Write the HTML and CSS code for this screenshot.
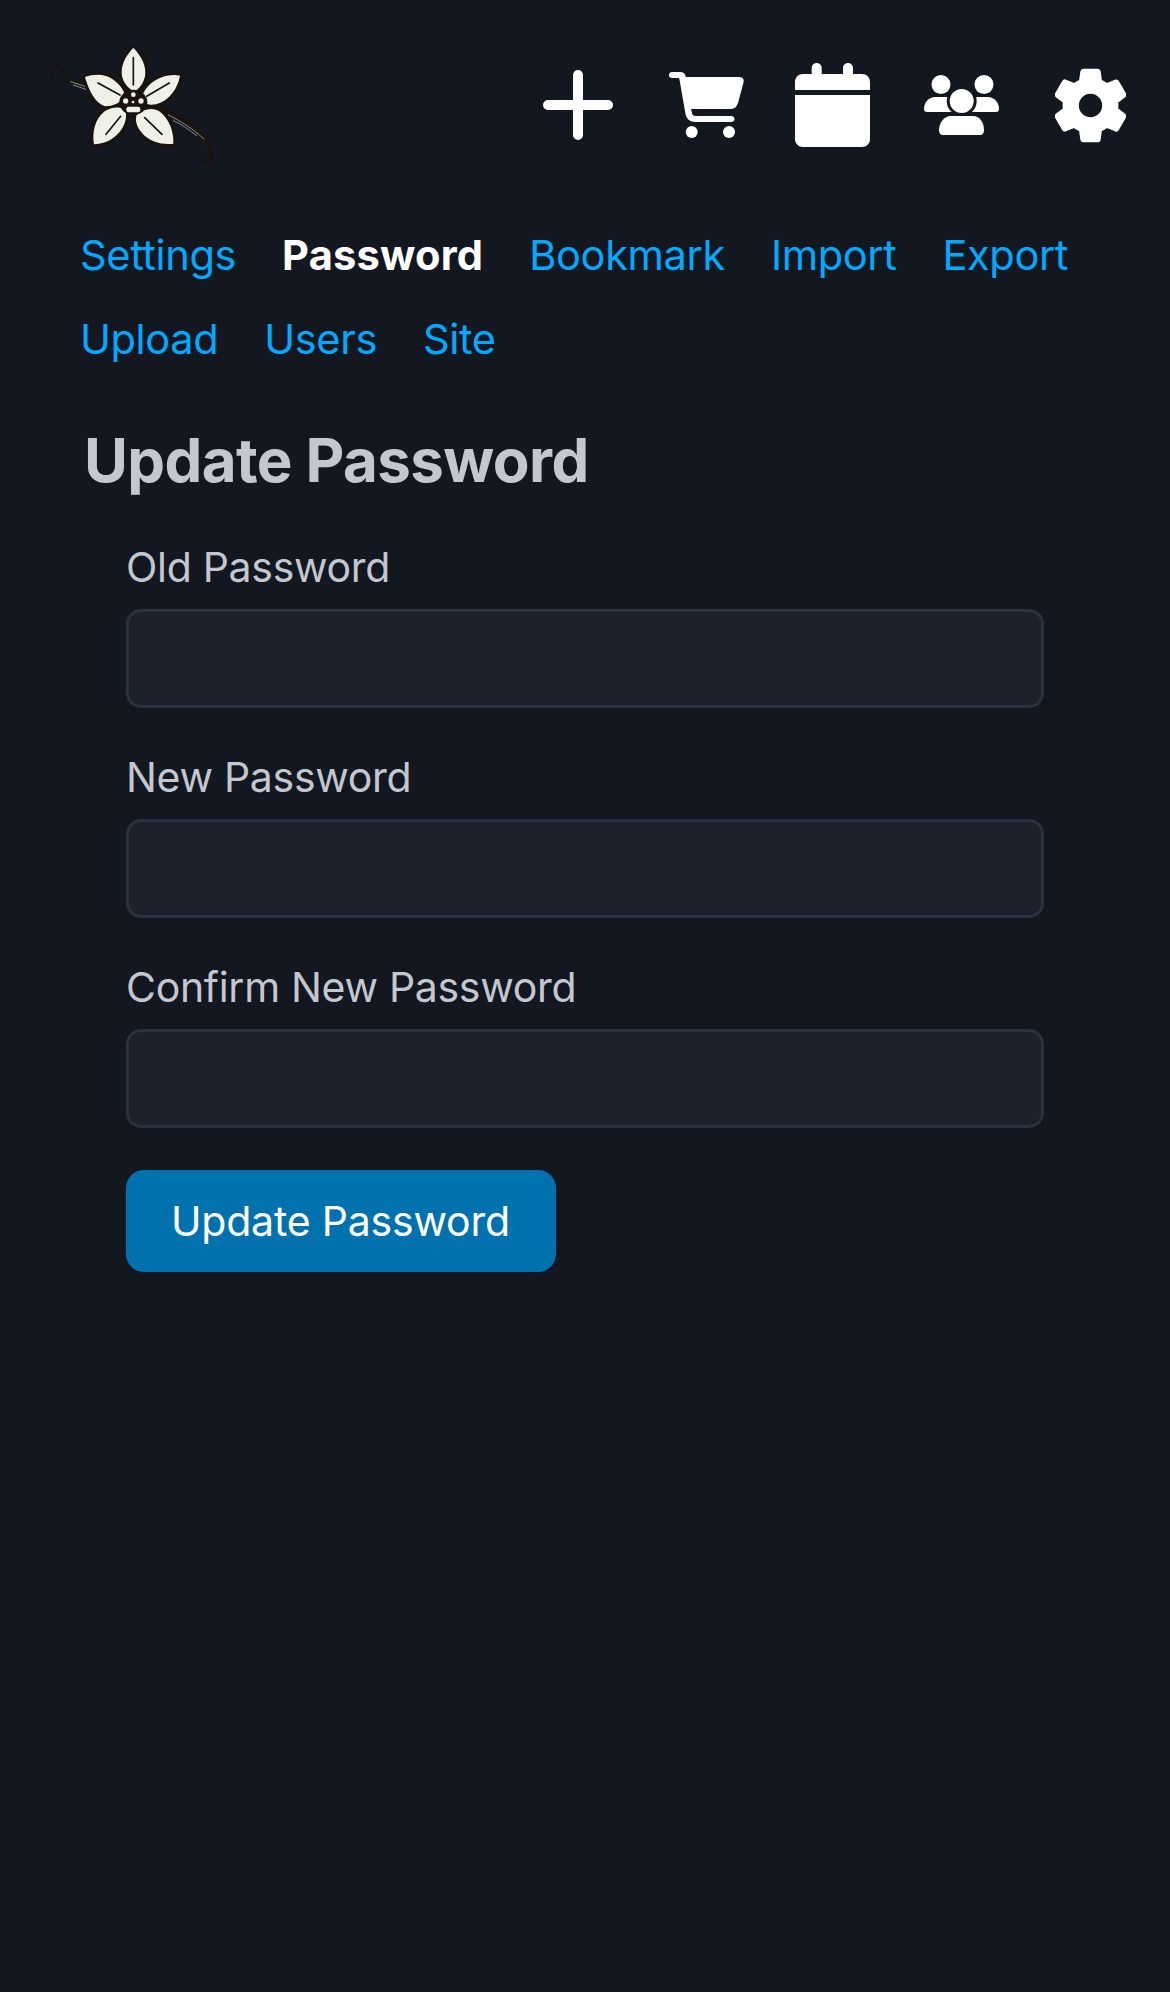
FILE: index.html
```html
<!DOCTYPE html>
<html lang="en">
<head>
  <meta charset="UTF-8">
  <title>Update Password</title>
  <link rel="stylesheet" href="styles.css">
</head>
<body>

  <header class="topbar">
    <a href="#" class="logo">
      <svg viewBox="0 0 600 450" width="200" height="150" aria-label="Vanilla flower">
        <defs>
          <g id="petals">
            <path d="M310 56 C336 84 350 112 345 142 C340 165 327 180 312 188 C295 178 282 165 276 142 C271 112 284 84 310 56Z"/>
            <path d="M450 140 C444 175 420 214 378 226 C360 230 342 226 334 208 C342 184 358 160 388 148 C408 139 432 136 450 140Z"/>
            <path d="M165 144 C198 133 228 136 250 152 C268 165 280 180 286 202 C272 222 250 232 225 232 C197 224 176 185 165 144Z"/>
            <path d="M192 346 C186 312 194 270 224 247 C242 234 265 232 284 240 C293 258 288 288 266 312 C246 334 222 344 192 346Z"/>
            <path d="M430 344 C395 348 360 338 338 314 C320 296 314 274 320 258 C340 240 368 234 390 248 C418 270 432 308 430 344Z"/>
          </g>
        </defs>
        <g fill="none" stroke="#1a130c" stroke-linecap="round">
          <path d="M65 142 C60 118 75 105 88 112 C95 135 130 160 175 178" stroke-width="8"/>
          <path d="M395 240 C450 262 510 300 535 340 C550 370 548 392 522 402" stroke-width="13"/>
        </g>
        <g fill="none" stroke="#c9c8bd" stroke-width="2" stroke-linecap="round">
          <path d="M122 158 L165 172"/>
          <path d="M130 168 L170 182"/>
          <path d="M415 258 C450 275 490 300 522 330"/>
          <path d="M430 275 C455 285 480 305 500 320"/>
        </g>
        <use href="#petals" fill="#1a130c" stroke="#1a130c" stroke-width="18" stroke-linejoin="round"/>
        <use href="#petals" fill="#eff0e8"/>
        <g fill="none" stroke="#1a130c" stroke-width="5" stroke-linecap="round">
          <path d="M310 86 L310 168"/>
          <path d="M418 162 L350 202"/>
          <path d="M204 162 L270 198"/>
          <path d="M228 316 L272 262"/>
          <path d="M396 316 L344 266"/>
        </g>
        <ellipse cx="310" cy="220" rx="42" ry="38" fill="#1a130c"/>
        <g fill="#eff0e8">
          <circle cx="287" cy="216" r="8"/>
          <circle cx="310" cy="197" r="7"/>
          <circle cx="333" cy="216" r="8"/>
          <circle cx="309" cy="219" r="4"/>
          <rect x="289" y="233" width="42" height="17" rx="7"/>
        </g>
      </svg>
    </a>
    <nav class="icons">
      <a href="#" class="icon-link">
        <svg viewBox="0 0 70 70" width="70" height="70"><path d="M35 5 V65 M5 35 H65" stroke="#fff" stroke-width="10" stroke-linecap="round" fill="none"/></svg>
      </a>
      <a href="#" class="icon-link">
        <svg viewBox="0 0 75 66" width="75" height="66">
          <path fill="#fff" d="M3 0 H11 C14 0 16 1.500 16.500 4 L16.800 5 H70 C73.500 5 75.500 7 74.500 10.500 L69 31 C67.500 35.500 65 37 61 37 H22 L23 41 C23.300 43 24.500 44 26.500 44 H62 C64 44 65.500 45.300 65.500 47 C65.500 48.700 64 50 62 50 H26.500 C21 50 17.500 47 16.500 42 L10.500 7.500 C10.300 6.500 10 6 9 6 H3 C1.200 6 0 4.700 0 3 C0 1.300 1.200 0 3 0Z"/>
          <circle cx="22.700" cy="60" r="6" fill="#fff"/>
          <circle cx="60" cy="60" r="6" fill="#fff"/>
        </svg>
      </a>
      <a href="#" class="icon-link calendar">
        <svg viewBox="0 0 75 84" width="75" height="84">
          <path fill="#fff" d="M21.700 0 C24.500 0 26.700 2.200 26.700 5 V11 H48 V5 C48 2.200 50.200 0 53 0 C55.800 0 58 2.200 58 5 V11 H67 C71.500 11 75 14.500 75 19 V27 H0 V19 C0 14.500 3.500 11 8 11 H16.700 V5 C16.700 2.200 18.900 0 21.700 0Z"/>
          <path fill="#fff" d="M0 32 H75 V76 C75 80.500 71.500 84 67 84 H8 C3.500 84 0 80.500 0 76Z"/>
        </svg>
      </a>
      <a href="#" class="icon-link">
        <svg viewBox="0 0 75 60" width="75" height="60">
          <g fill="#fff">
            <circle cx="17" cy="9.500" r="9.500"/>
            <circle cx="60" cy="9.500" r="9.500"/>
            <path d="M11 22 H23 C26 22 28 23 29 25 V37 H3 C1 37 0 36 0 34 C0 27 5 22 11 22Z"/>
            <path d="M54 22 H64 C70 22 75 27 75 34 C75 36 74 37 72 37 H47 V25 C48 23 51 22 54 22Z"/>
            <circle cx="37.700" cy="26" r="13.500" stroke="#13171f" stroke-width="3"/>
            <path d="M27 41 H49 C56 41 60 48 60 55 C60 58.500 58.500 60 56 60 H19 C16.500 60 15 58.500 15 55 C15 48 20 41 27 41Z"/>
          </g>
        </svg>
      </a>
      <a href="#" class="icon-link">
        <svg viewBox="2.400 1.900 19.200 20.200" width="71" height="75"><path fill="#fff" stroke="#fff" stroke-width=".7" stroke-linejoin="round" fill-rule="evenodd" d="M19.140 12.940c.04-.3.06-.61.06-.94 0-.32-.02-.64-.07-.94l2.030-1.580c.18-.14.23-.41.12-.61l-1.920-3.320c-.12-.22-.37-.29-.59-.22l-2.390.96c-.5-.38-1.030-.7-1.620-.94l-.36-2.540c-.04-.24-.24-.41-.48-.41h-3.840c-.24 0-.43.17-.47.41l-.36 2.540c-.59.24-1.130.57-1.620.94l-2.390-.96c-.22-.08-.47 0-.59.22L2.740 8.870c-.12.21-.08.47.12.61l2.030 1.580c-.05.3-.09.63-.09.94s.02.64.07.94l-2.030 1.580c-.18.14-.23.41-.12.61l1.920 3.320c.12.22.37.29.59.22l2.390-.96c.5.38 1.030.7 1.620.94l.36 2.540c.05.24.24.41.48.41h3.840c.24 0 .44-.17.47-.41l.36-2.540c.59-.24 1.130-.56 1.620-.94l2.390.96c.22.08.47 0 .59-.22l1.920-3.320c.12-.22.07-.47-.12-.61l-2.010-1.580zM12 15.500c-1.930 0-3.500-1.570-3.500-3.500s1.570-3.500 3.500-3.500 3.500 1.570 3.500 3.500-1.570 3.500-3.500 3.500z"/></svg>
      </a>
    </nav>
  </header>

  <nav class="tabs">
    <a href="#">Settings</a>
    <a href="#" class="active">Password</a>
    <a href="#">Bookmark</a>
    <a href="#">Import</a>
    <a href="#">Export</a>
    <a href="#">Upload</a>
    <a href="#">Users</a>
    <a href="#">Site</a>
  </nav>

  <main class="content">
    <h1>Update Password</h1>
    <form class="password-form">
      <div class="form-group">
        <label for="old-password">Old Password</label>
        <input type="password" class="form-control" id="old-password">
      </div>
      <div class="form-group">
        <label for="new-password">New Password</label>
        <input type="password" class="form-control" id="new-password">
      </div>
      <div class="form-group">
        <label for="confirm-password">Confirm New Password</label>
        <input type="password" class="form-control" id="confirm-password">
      </div>
      <button type="submit" class="btn">Update Password</button>
    </form>
  </main>

</body>
</html>
```

FILE: styles.css
```css
* {
  box-sizing: border-box;
}

body {
  margin: 0;
  min-height: 1992px;
  background-color: #13171f;
  color: #c2c7d0;
  font-family: Inter, "Liberation Sans", sans-serif;
  font-size: 41px;
  line-height: 60px;
  letter-spacing: -0.3px;
}

a {
  text-decoration: none;
}

.topbar {
  display: flex;
  justify-content: space-between;
  align-items: center;
  height: 210px;
  padding: 0 42px 0 30px;
}

.logo {
  display: flex;
  margin-top: -2px;
}

.icons {
  display: flex;
  align-items: center;
  gap: 54px;
}

.icon-link {
  display: flex;
  justify-content: center;
  align-items: center;
  width: 75px;
}

.icon-link.calendar {
  margin-left: -3px;
}

.tabs {
  display: flex;
  flex-wrap: wrap;
  gap: 24px 46px;
  padding: 15px 80px 0;
  font-size: 41.6px;
  letter-spacing: -0.4px;
}

.tabs a {
  color: #01aaff;
}

.tabs a.active {
  color: #fff;
  font-weight: 700;
  letter-spacing: 0.2px;
}

.content {
  padding: 0 126px 0 84px;
}

.content h1 {
  margin: 46px 0 32px;
  font-size: 60px;
  line-height: 90px;
  font-weight: 700;
  letter-spacing: -0.6px;
}

.password-form {
  padding-left: 42px;
}

.form-group {
  margin-bottom: 39px;
}

.form-group label {
  display: block;
  margin-bottom: 12px;
}

.form-control {
  display: block;
  width: 100%;
  height: 99px;
  background-color: #1c212c;
  border: 3px solid #2a3140;
  border-radius: 15px;
}

.btn {
  display: block;
  height: 102px;
  margin-top: 42px;
  padding: 0 46px 0 45px;
  background-color: #0172ad;
  color: #fff;
  border: none;
  border-radius: 18px;
  font-family: inherit;
  font-size: 41px;
  letter-spacing: -0.2px;
}
```
